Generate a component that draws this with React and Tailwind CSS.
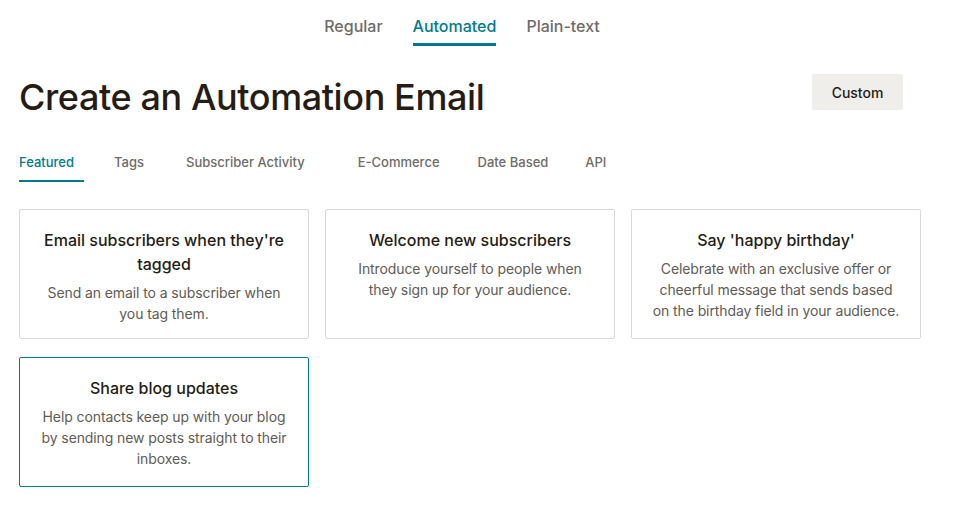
import React from "react";

const cards = [
  {
    title: ["Email subscribers when they're", "tagged"],
    body: ["Send an email to a subscriber when", "you tag them."],
  },
  {
    title: ["Welcome new subscribers"],
    body: ["Introduce yourself to people when", "they sign up for your audience."],
  },
  {
    title: ["Say 'happy birthday'"],
    body: ["Celebrate with an exclusive offer or", "cheerful message that sends based", "on the birthday field in your audience."],
  },
  {
    title: ["Share blog updates"],
    body: ["Help contacts keep up with your blog", "by sending new posts straight to their", "inboxes."],
    active: true,
  },
];

const subTabs = [
  { label: "Featured", cls: "pr-[10px]", active: true },
  { label: "Tags", cls: "ml-[30px]" },
  { label: "Subscriber Activity", cls: "ml-[42px]" },
  { label: "E-Commerce", cls: "ml-[53px]" },
  { label: "Date Based", cls: "ml-[38px]" },
  { label: "API", cls: "ml-[37px]" },
];

export default function App() {
  return (
    <div className="h-[529px] w-[954px] overflow-hidden bg-white font-['Inter',sans-serif] text-[#241c15]">
      <nav className="flex justify-center gap-[30px] pr-[30px] pt-[14px] text-[16px] font-medium text-[#6e6b68]">
        <span className="pb-[7px]">Regular</span>
        <span className="border-b-[3px] border-[#007c89] pb-[5px] text-[#007c89]">Automated</span>
        <span className="pb-[7px]">Plain-text</span>
      </nav>

      <header className="mt-[27px] flex items-start justify-between pl-[19px] pr-[51px]">
        <h1 className="mt-[2px] text-[36px] font-medium leading-[44px] tracking-[-0.4px]">Create an Automation Email</h1>
        <button className="mt-[1px] h-[36px] w-[91px] rounded-[2px] bg-[#efeeea] text-[14px] font-medium">Custom</button>
      </header>

      <div className="mt-[34px] flex pl-[19px] text-[13px] font-medium text-[#6e6b68]">
        {subTabs.map((t) => (
          <span
            key={t.label}
            className={`${t.cls} ${t.active ? "border-b-2 border-[#007c89] text-[#007c89]" : "border-b-2 border-transparent"} pb-[7px]`}
          >
            {t.label}
          </span>
        ))}
      </div>

      <div className="mt-[27px] grid w-[921px] grid-cols-3 gap-x-[16px] gap-y-[18px] pl-[19px]">
        {cards.map((c) => (
          <div
            key={c.title[0]}
            className={`flex h-[130px] flex-col items-center rounded-[2px] border px-[10px] pt-[18px] text-center ${
              c.active ? "border-[#007c89]" : "border-[#d9d9d9]"
            }`}
          >
            <h3 className="text-[16px] font-medium leading-[24px]">
              {c.title.map((l) => (
                <span key={l} className="block whitespace-nowrap">{l}</span>
              ))}
            </h3>
            <p className="mt-[6px] text-[14px] leading-[21px] tracking-[-0.1px] text-[#5f5b57]">
              {c.body.map((l) => (
                <span key={l} className="block whitespace-nowrap">{l}</span>
              ))}
            </p>
          </div>
        ))}
      </div>
    </div>
  );
}
